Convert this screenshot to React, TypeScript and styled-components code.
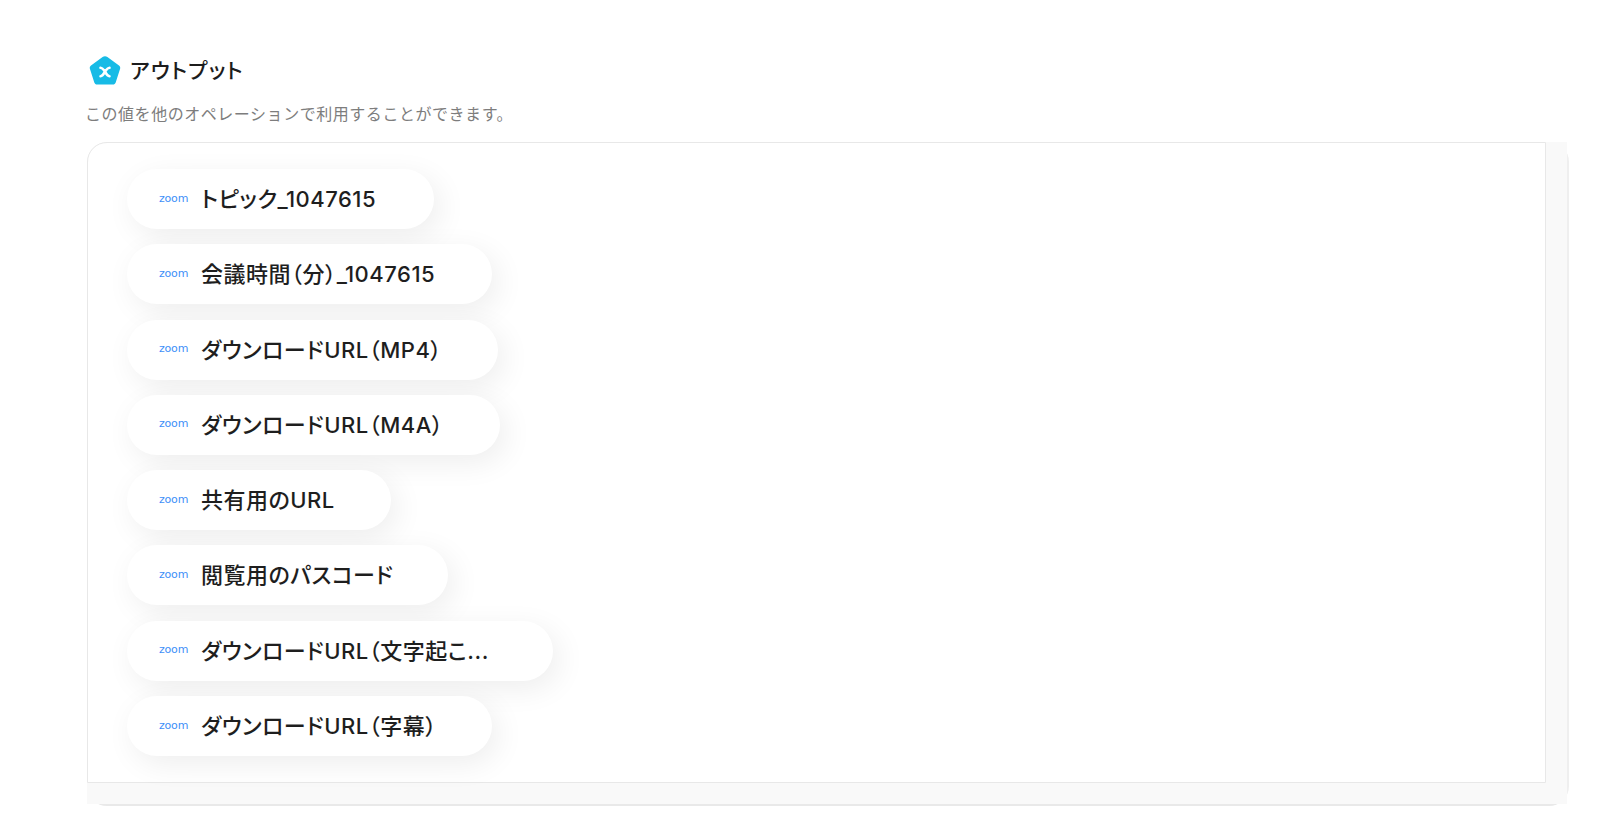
import React from "react";
import styled, { createGlobalStyle } from "styled-components";

const GlobalStyle = createGlobalStyle`
    html, body {
        margin: 0;
        padding: 0;
        background-color: #FFFFFF;
    }
`;

const Page = styled.div`
    width: 1600px;
    height: 839px;
    box-sizing: border-box;
    overflow: hidden;
    padding: 56px 31px 0 86px;
    font-family: Inter, "Noto Sans CJK JP", sans-serif;
`;

const TitleRow = styled.div`
    display: flex;
    align-items: center;
    gap: 9px;
    height: 30px;
    padding-left: 3px;
`;

const Title = styled.h2`
    margin: 0;
    font-size: 21px;
    font-weight: 500;
    line-height: 28px;
    letter-spacing: 1.2px;
    color: #1C1C1C;
    font-feature-settings: "palt";
`;

const Description = styled.p`
    margin: 15px 0 15px -1px;
    font-size: 16px;
    line-height: 26px;
    letter-spacing: 0.54px;
    color: #7D7D7D;
`;

const Frame = styled.div`
    width: 1482px;
    height: 664px;
    margin-left: 1px;
    box-sizing: border-box;
    border-right: 2px solid #EFEFEF;
    border-bottom: 2px solid #E9E9E9;
    border-radius: 20px;
`;

const ScrollTrack = styled.div`
    width: 1480px;
    height: 662px;
    box-sizing: border-box;
    padding: 0 21px 21px 0;
    background-color: #F9F9F9;
    border-top-left-radius: 20px;
`;

const Viewport = styled.div`
    height: 100%;
    box-sizing: border-box;
    padding: 26px 0 0 39px;
    display: flex;
    flex-direction: column;
    align-items: flex-start;
    gap: 15.3px;
    background-color: #FFFFFF;
    border: 1.5px solid #E8E8E8;
    border-top-left-radius: 20px;
`;

const Pill = styled.div<{ $width: number }>`
    display: flex;
    align-items: center;
    width: ${(p) => p.$width}px;
    height: 60px;
    box-sizing: border-box;
    padding-left: 32px;
    background-color: #FFFFFF;
    border-radius: 30px;
    box-shadow: 6px 8px 30px rgba(0, 0, 0, 0.07);
`;

const ZoomMark = styled.span`
    width: 29px;
    margin: 0 13px 1px 0;
    font-family: "DejaVu Sans", sans-serif;
    font-size: 11px;
    font-weight: 400;
    letter-spacing: -0.2px;
    line-height: 14px;
    color: #3E8FF8;
`;

const PillLabel = styled.span`
    font-size: 22px;
    font-weight: 500;
    line-height: 30px;
    letter-spacing: 0.52px;
    color: #1E1E1E;
    white-space: nowrap;
    font-feature-settings: "palt";
`;

const outputs = [
    { label: "トピック_1047615", width: 307 },
    { label: "会議時間（分）_1047615", width: 365 },
    { label: "ダウンロードURL（MP4）", width: 371 },
    { label: "ダウンロードURL（M4A）", width: 373 },
    { label: "共有用のURL", width: 264 },
    { label: "閲覧用のパスコード", width: 321 },
    { label: "ダウンロードURL（文字起こ...", width: 426 },
    { label: "ダウンロードURL（字幕）", width: 365 },
];

function PentagonIcon() {
    return (
        <svg width="32" height="30" viewBox="0 0 32 30" aria-hidden="true">
            <path
                d="M13.6 1 2 9.400C.9 10.200.5 11.500.9 12.800l4.400 13.700c.4 1.200 1.500 2.100 2.800 2.100h15.800c1.300 0 2.400-.8 2.800-2.100l4.400-13.700c.4-1.300 0-2.600-1.100-3.400L18.400 1c-1.400-1-3.400-1-4.800 0Z"
                fill="#17BBE6"
            />
            <path
                d="M11.500 11.800c2.400.2 3.200 2.200 4.500 3.700 1.300-1.500 2.100-3.500 4.500-3.700M11.500 20.200c2.400-.2 3.200-2.200 4.500-4.700 1.300 2.500 2.100 4.500 4.500 4.700"
                fill="none"
                stroke="#FFFFFF"
                strokeWidth="2.600"
                strokeLinecap="round"
            />
        </svg>
    );
}

export default function App() {
    return (
        <Page>
            <GlobalStyle />
            <TitleRow>
                <PentagonIcon />
                <Title>アウトプット</Title>
            </TitleRow>
            <Description>この値を他のオペレーションで利用することができます。</Description>
            <Frame>
                <ScrollTrack>
                    <Viewport>
                        {outputs.map((item) => (
                            <Pill key={item.label} $width={item.width}>
                                <ZoomMark>zoom</ZoomMark>
                                <PillLabel>{item.label}</PillLabel>
                            </Pill>
                        ))}
                    </Viewport>
                </ScrollTrack>
            </Frame>
        </Page>
    );
}
